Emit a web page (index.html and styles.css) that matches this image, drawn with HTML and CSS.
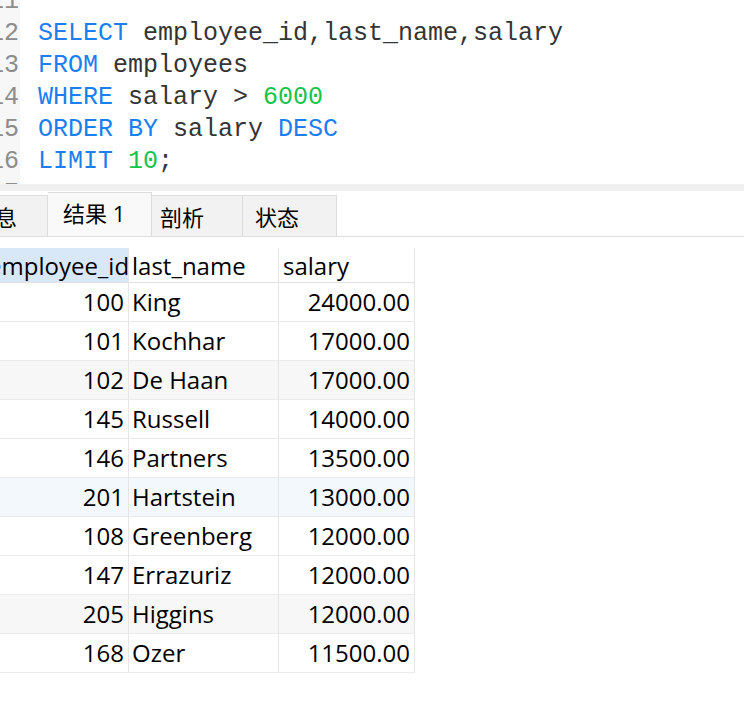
FILE: index.html
```html
<!DOCTYPE html>
<html lang="zh-CN">
<head>
<meta charset="utf-8">
<title>查询结果</title>
<link rel="stylesheet" href="styles.css">
</head>
<body>
<div class="editor">
  <div class="gutter">
    <div class="gutter-lines">
      <div class="ln">11</div>
      <div class="ln">12</div>
      <div class="ln">13</div>
      <div class="ln">14</div>
      <div class="ln">15</div>
      <div class="ln">16</div>
      <div class="ln">17</div>
    </div>
  </div>
  <div class="code">
    <div class="code-lines">
      <div class="cl"></div>
      <div class="cl"><span class="kw">SELECT</span> employee_id,last_name,salary</div>
      <div class="cl"><span class="kw">FROM</span> employees</div>
      <div class="cl"><span class="kw">WHERE</span> salary &gt; <span class="num">6000</span></div>
      <div class="cl"><span class="kw">ORDER BY</span> salary <span class="kw">DESC</span></div>
      <div class="cl"><span class="kw">LIMIT</span> <span class="num">10</span>;</div>
      <div class="cl"></div>
    </div>
  </div>
</div>
<div class="divider"></div>
<div class="tabbar">
  <div class="tab tab-info">信息</div>
  <div class="tab tab-active">结果 1</div>
  <div class="tab tab-profile">剖析</div>
  <div class="tab tab-status">状态</div>
</div>
<div class="grid-wrap">
  <div class="grid">
    <div class="row head">
      <div class="cell c1 sel">employee_id</div>
      <div class="cell c2">last_name</div>
      <div class="cell c3 left">salary</div>
    </div>
    <div class="row"><div class="cell c1">100</div><div class="cell c2">King</div><div class="cell c3">24000.00</div></div>
    <div class="row"><div class="cell c1">101</div><div class="cell c2">Kochhar</div><div class="cell c3">17000.00</div></div>
    <div class="row alt"><div class="cell c1">102</div><div class="cell c2">De Haan</div><div class="cell c3">17000.00</div></div>
    <div class="row"><div class="cell c1">145</div><div class="cell c2">Russell</div><div class="cell c3">14000.00</div></div>
    <div class="row"><div class="cell c1">146</div><div class="cell c2">Partners</div><div class="cell c3">13500.00</div></div>
    <div class="row hover"><div class="cell c1">201</div><div class="cell c2">Hartstein</div><div class="cell c3">13000.00</div></div>
    <div class="row"><div class="cell c1">108</div><div class="cell c2">Greenberg</div><div class="cell c3">12000.00</div></div>
    <div class="row"><div class="cell c1">147</div><div class="cell c2">Errazuriz</div><div class="cell c3">12000.00</div></div>
    <div class="row alt"><div class="cell c1">205</div><div class="cell c2">Higgins</div><div class="cell c3">12000.00</div></div>
    <div class="row"><div class="cell c1">168</div><div class="cell c2">Ozer</div><div class="cell c3">11500.00</div></div>
  </div>
</div>
</body>
</html>
```

FILE: styles.css
```css
html, body {
  margin: 0;
  padding: 0;
  background: #ffffff;
}

body {
  font-family: "Open Sans", "Noto Sans CJK SC", sans-serif;
  color: #000;
  overflow: hidden;
}

/* ---------- editor ---------- */
.editor {
  display: flex;
  height: 184px;
  overflow: hidden;
  font-family: "Liberation Mono", "DejaVu Sans Mono", monospace;
  font-size: 25px;
  line-height: 32px;
}

.gutter {
  flex: 0 0 20px;
  width: 20px;
  background: #f7f7f7;
  display: flex;
  justify-content: flex-end;
  overflow: hidden;
  padding-right: 1px;
  box-sizing: border-box;
}

.gutter-lines {
  flex: 0 0 auto;
  margin-top: -14px;
  color: #8c8c8c;
  text-align: right;
  white-space: nowrap;
}

.ln {
  height: 32px;
}

.code {
  flex: 1;
  padding-left: 18px;
  color: #353535;
}

.code-lines {
  margin-top: -14px;
}

.cl {
  height: 32px;
  white-space: pre;
}

.kw { color: #1a7ff0; }
.num { color: #14c44a; }

.divider {
  height: 7px;
  background: #f0f0f0;
}

/* ---------- tabs ---------- */
.tabbar {
  display: flex;
  align-items: flex-end;
  height: 45px;
  border-bottom: 1px solid #dedede;
  overflow: hidden;
}

.tab {
  display: flex;
  align-items: center;
  box-sizing: border-box;
  height: 41px;
  font-size: 22px;
  color: #000;
  background: #f2f2f2;
  border-top: 1px solid #dcdcdc;
  border-right: 1px solid #dcdcdc;
  white-space: nowrap;
}

.tab-info {
  margin-left: -37px;
  width: 85px;
  padding-left: 9px;
  border-left: 1px solid #dcdcdc;
}

.tab-active {
  width: 104px;
  height: 44px;
  padding-left: 15px;
  padding-bottom: 6px;
  background: #f9f9f9;
}

.tab-profile {
  width: 91px;
  padding-left: 8px;
}

.tab-status {
  width: 94px;
  padding-left: 12px;
}

/* ---------- result grid ---------- */
.grid-wrap {
  margin-top: 11px;
  overflow: hidden;
}

.grid {
  margin-left: -16px;
  width: fit-content;
  font-size: 24px;
}

.row {
  display: grid;
  grid-template-columns: 145px 150px 136px;
  height: 39px;
}

.row.head {
  height: 35px;
}

.cell {
  box-sizing: border-box;
  display: flex;
  align-items: center;
  border-right: 1px solid #e6e6e6;
  border-bottom: 1px solid #ebebeb;
  white-space: nowrap;
  overflow: hidden;
  padding-bottom: 1px;
}

.head .cell {
  border-bottom-color: #e2e2e2;
  padding-bottom: 0;
}

.c1 {
  justify-content: flex-end;
  padding-right: 4px;
}

.c2 {
  padding-left: 3px;
}

.c3 {
  justify-content: flex-end;
  padding-right: 4px;
}

.c3.left {
  justify-content: flex-start;
  padding-left: 4px;
}

.head .c1 {
  justify-content: flex-start;
  padding-left: 4px;
}

.sel {
  background: #d9e8f8;
}

.row.alt {
  background: #f7f7f7;
}

.row.hover {
  background: #f3f8fd;
}
```
